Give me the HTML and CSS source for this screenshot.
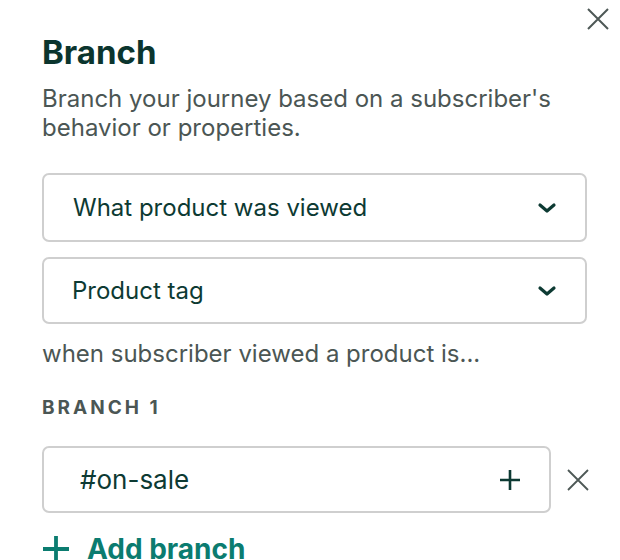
FILE: index.html
```html
<!DOCTYPE html>
<html>
<head>
<meta charset="utf-8">
<link rel="stylesheet" href="styles.css">
</head>
<body>
<div class="panel">
  <button class="close" aria-label="Close">
    <svg width="22" height="22" viewBox="0 0 22 22"><path d="M1 1L21 21M21 1L1 21" stroke="#4d5856" stroke-width="2" fill="none"/></svg>
  </button>
  <h1 class="title">Branch</h1>
  <p class="desc">Branch your journey based on a subscriber's behavior or properties.</p>
  <div class="select sel1">
    <span class="sel-text">What product was viewed</span>
    <svg class="chev" width="20" height="12" viewBox="0 0 20 12"><path d="M3 3L10 9L17 3" stroke="#0d3a33" stroke-width="3.2" fill="none" stroke-linecap="round" stroke-linejoin="round"/></svg>
  </div>
  <div class="select sel2">
    <span class="sel-text">Product tag</span>
    <svg class="chev" width="20" height="12" viewBox="0 0 20 12"><path d="M3 3L10 9L17 3" stroke="#0d3a33" stroke-width="3.2" fill="none" stroke-linecap="round" stroke-linejoin="round"/></svg>
  </div>
  <p class="hint">when subscriber viewed a product is...</p>
  <div class="label">BRANCH 1</div>
  <div class="branch-row">
    <div class="tag-input">
      <span class="tag-text">#on-sale</span>
      <svg class="plus" width="24" height="24" viewBox="0 0 24 24"><path d="M12 2V22M2 12H22" stroke="#0d3a33" stroke-width="2.6" fill="none"/></svg>
    </div>
    <button class="remove" aria-label="Remove">
      <svg width="22" height="22" viewBox="0 0 22 22"><path d="M1 1L21 21M21 1L1 21" stroke="#4d5856" stroke-width="1.8" fill="none"/></svg>
    </button>
  </div>
  <div class="add">
    <svg class="add-plus" width="28" height="28" viewBox="0 0 28 28"><path d="M14 1V27M1 14H27" stroke="#0b7c70" stroke-width="3.8" fill="none"/></svg>
    <span class="add-text">Add branch</span>
  </div>
</div>
</body>
</html>
```
FILE: styles.css
```css
html, body {
  margin: 0;
  padding: 0;
  background: #ffffff;
}
body {
  font-family: Inter, "Open Sans", "Liberation Sans", sans-serif;
  color: #0d3a33;
}
.panel {
  position: relative;
  width: 620px;
  height: 560px;
  overflow: hidden;
  padding: 30px 31px 0 42px;
  box-sizing: border-box;
}
.close {
  position: absolute;
  top: 8px;
  right: 11px;
  border: 0;
  background: none;
  padding: 0;
  width: 22px;
  height: 22px;
}
.title {
  margin: 0;
  font-size: 33px;
  line-height: 44px;
  font-weight: 700;
  color: #0b352e;
}
.desc {
  margin: 10px 0 0;
  font-size: 24px;
  line-height: 29px;
  color: #4b5654;
  width: 540px;
}
.select {
  display: flex;
  align-items: center;
  justify-content: space-between;
  border: 2px solid #cfcfcf;
  border-radius: 7px;
  box-sizing: border-box;
  padding: 0 28px 0 29px;
  width: 545px;
}
.sel1 {
  margin-top: 31px;
  height: 69px;
}
.sel2 {
  margin-top: 15px;
  height: 67px;
  padding-left: 28px;
}
.sel-text {
  font-size: 24px;
  color: #0d3a33;
}
.hint {
  margin: 15px 0 0;
  font-size: 24px;
  line-height: 29px;
  color: #4b5654;
}
.label {
  margin-top: 28px;
  font-size: 19px;
  font-weight: 700;
  letter-spacing: 3px;
  color: #4b5654;
  line-height: 24px;
}
.branch-row {
  display: flex;
  align-items: center;
  margin-top: 26px;
  gap: 16px;
}
.tag-input {
  flex: 0 0 auto;
  width: 509px;
  height: 67px;
  box-sizing: border-box;
  border: 2px solid #cfcfcf;
  border-radius: 7px;
  display: flex;
  align-items: center;
  justify-content: space-between;
  padding: 0 27px 0 36px;
}
.tag-text {
  font-size: 26px;
  color: #0d3a33;
}
.remove {
  flex: 0 0 auto;
  border: 0;
  background: none;
  padding: 0;
  width: 22px;
  height: 22px;
}
.add {
  display: flex;
  align-items: center;
  gap: 17px;
  margin-top: 19px;
}
.add-text {
  font-size: 28px;
  font-weight: 700;
  color: #0b7c70;
}
```
